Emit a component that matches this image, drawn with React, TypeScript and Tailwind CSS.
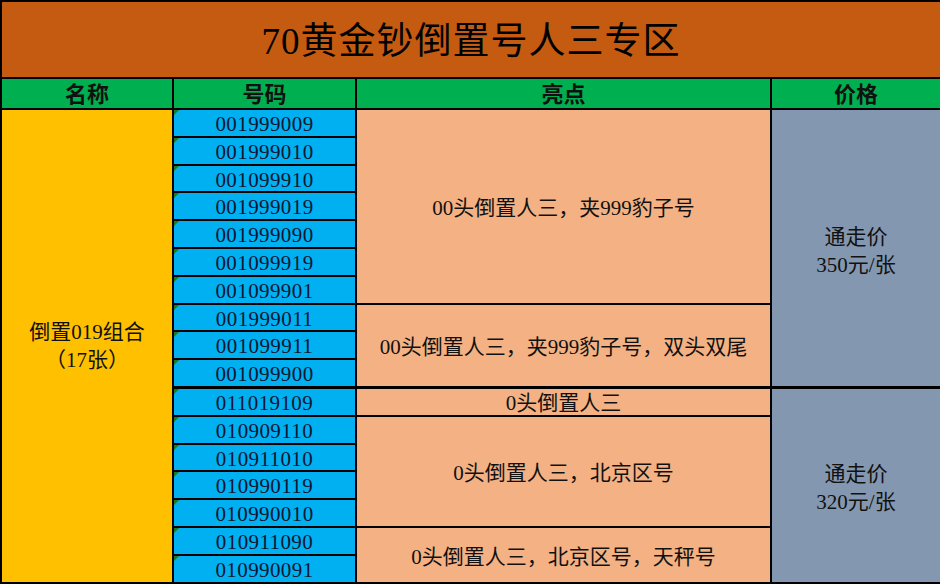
const numbers = [
  '001999009',
  '001999010',
  '001099910',
  '001999019',
  '001999090',
  '001099919',
  '001099901',
  '001999011',
  '001099911',
  '001099900',
  '011019109',
  '010909110',
  '010911010',
  '010990119',
  '010990010',
  '010911090',
  '010990091',
];

// highlight text, keyed by the row where the merged cell starts
const highlights: Record<number, { span: number; text: string }> = {
  0: { span: 7, text: '00头倒置人三，夹999豹子号' },
  7: { span: 3, text: '00头倒置人三，夹999豹子号，双头双尾' },
  10: { span: 1, text: '0头倒置人三' },
  11: { span: 4, text: '0头倒置人三，北京区号' },
  15: { span: 2, text: '0头倒置人三，北京区号，天秤号' },
};

const prices: Record<number, { span: number; price: string }> = {
  0: { span: 10, price: '350元/张' },
  10: { span: 7, price: '320元/张' },
};

const font = { fontFamily: '"Liberation Serif", "Noto Sans CJK SC", serif' };

export default function App() {
  return (
    <div className="w-[940px] h-[585px] overflow-hidden bg-white" style={font}>
      <table className="w-[940px] table-fixed border-collapse border-2 border-black text-[#111]">
        <colgroup>
          <col className="w-[172px]" />
          <col className="w-[183px]" />
          <col className="w-[415px]" />
          <col className="w-[170px]" />
        </colgroup>
        <thead>
          <tr className="h-[77px]">
            <th
              colSpan={4}
              className="border-2 border-black bg-[#C55A11] text-[37px] font-normal text-black tracking-[1px] pt-1"
            >
              70黄金钞倒置号人三专区
            </th>
          </tr>
          <tr className="h-[31px] bg-[#00B050] text-[22px] font-bold">
            <th className="border-2 border-black leading-none pt-0.5">名称</th>
            <th className="border-2 border-black leading-none pt-0.5">号码</th>
            <th className="border-2 border-black leading-none pt-0.5">亮点</th>
            <th className="border-2 border-black leading-none pt-0.5">价格</th>
          </tr>
        </thead>
        <tbody className="text-[21px] leading-[22.8px]">
          {numbers.map((num, i) => (
            <tr key={num}>
              {i === 0 && (
                <td rowSpan={17} className="border-2 border-black bg-[#FFC000] text-center align-middle leading-[28px]">
                  <div>倒置019组合</div>
                  <div>（17张）</div>
                </td>
              )}
              <td
                className={`relative p-0 pt-[3px] bg-[#00B0F0] text-center text-[#0b1633] tracking-[0.4px] border-x-2 border-black ${
                  i === 10 ? 'border-t-[3px]' : 'border-t-2'
                } border-b-2`}
              >
                <span className="absolute left-0 top-0 w-0 h-0 border-t-[5px] border-r-[5px] border-t-[#1f7a1f] border-r-transparent" />
                {num}
              </td>
              {highlights[i] && (
                <td
                  rowSpan={highlights[i].span}
                  className={`bg-[#F4B183] text-center align-middle p-0 border-x-2 border-b-2 border-black ${
                    highlights[i].span === 1 ? 'pt-[3px]' : 'pt-[5px]'
                  } ${i === 10 ? 'border-t-[3px]' : 'border-t-2'}`}
                >
                  {highlights[i].text}
                </td>
              )}
              {prices[i] && (
                <td
                  rowSpan={prices[i].span}
                  className={`bg-[#8497B0] text-center align-middle leading-[28px] pt-[6px] border-x-2 border-b-2 border-black ${
                    i === 10 ? 'border-t-[3px]' : 'border-t-2'
                  }`}
                >
                  <div>通走价</div>
                  <div>{prices[i].price}</div>
                </td>
              )}
            </tr>
          ))}
        </tbody>
      </table>
    </div>
  );
}
